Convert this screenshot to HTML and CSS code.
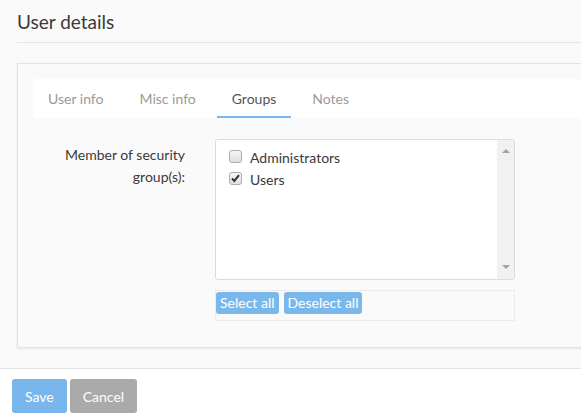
FILE: index.html
```html
<!DOCTYPE html>
<html>
<head>
<meta charset="utf-8">
<link rel="stylesheet" href="styles.css">
</head>
<body>
<div class="page">
  <header class="head">
    <h1 class="title">User details</h1>
  </header>
  <section class="panel">
    <nav class="tabs">
      <span class="tab">User info</span>
      <span class="tab">Misc info</span>
      <span class="tab active">Groups</span>
      <span class="tab">Notes</span>
    </nav>
    <div class="form-row">
      <label class="label">Member of security group(s):</label>
      <div class="field">
        <div class="listbox">
          <div class="items">
            <div class="item"><span class="cb"></span><span>Administrators</span></div>
            <div class="item"><span class="cb checked"><svg viewBox="0 0 13 13" width="13" height="13"><path d="M3 6.5 L5.3 9 L10 3.2" fill="none" stroke="#333" stroke-width="2"/></svg></span><span>Users</span></div>
          </div>
          <div class="scrollbar">
            <span class="arrow up"></span>
            <span class="arrow down"></span>
          </div>
        </div>
        <div class="actions">
          <button class="small-btn">Select all</button>
          <button class="small-btn">Deselect all</button>
        </div>
      </div>
    </div>
  </section>
</div>
<footer class="footer">
  <button class="btn save">Save</button>
  <button class="btn cancel">Cancel</button>
</footer>
</body>
</html>
```
FILE: styles.css
```css
* { box-sizing: border-box; }
html, body { margin: 0; padding: 0; }
body {
  font-family: "Lato", "Open Sans", sans-serif;
  font-size: 14px;
  color: #3a3a3a;
  background: #fff;
  overflow: hidden;
  width: 581px;
}
.page {
  background: #fafafa;
  padding: 0 0 20px 17px;
  border-bottom: 1px solid #e5e5e5;
  height: 369px;
}
.head {
  border-bottom: 1px solid #e5e5e5;
  height: 43px;
  padding-top: 9px;
}
.title {
  margin: 0;
  font-weight: normal;
  font-size: 19px;
  line-height: 26px;
  color: #3a3a3a;
}
.panel {
  margin-top: 20px;
  margin-right: -20px;
  border: 1px solid #e3e3e3;
  background: #fafafa;
  height: 285px;
  padding: 15px 0 0 15px;
  box-shadow: 0 1px 2px rgba(0,0,0,0.08);
}
.tabs {
  display: flex;
  background: #fff;
  height: 39px;
}
.tab {
  padding: 0 15px;
  margin-right: 6px;
  line-height: 39px;
  color: #9a9a9a;
  font-size: 14px;
}
.tab.active {
  color: #555;
  box-shadow: inset 0 -2px 0 #7ab8ec;
}
.form-row {
  display: flex;
  margin-top: 21px;
}
.label {
  width: 152px;
  text-align: right;
  padding-top: 5px;
  line-height: 22px;
  padding-left: 20px;
}
.field {
  margin-left: 30px;
  width: 300px;
}
.listbox {
  display: flex;
  height: 141px;
  border: 1px solid #dcdcdc;
  border-radius: 3px;
  background: #fff;
  overflow: hidden;
}
.items {
  flex: 1;
  padding: 6px 0 0 13px;
}
.item {
  display: flex;
  align-items: center;
  height: 22px;
  gap: 8px;
}
.cb {
  width: 13px;
  height: 13px;
  border: 1px solid #adadad;
  border-radius: 3px;
  background: linear-gradient(#f6f6f6, #e0e0e0);
  display: inline-flex;
  position: relative;
  top: -1px;
}
.cb svg { display: block; margin: -1px; }
.scrollbar {
  width: 17px;
  background: #f1f1f1;
  display: flex;
  flex-direction: column;
  justify-content: space-between;
  align-items: center;
  padding: 9px 0 10px;
}
.arrow {
  width: 0; height: 0;
  border-left: 4px solid transparent;
  border-right: 4px solid transparent;
}
.arrow.up { border-bottom: 4px solid #a3a3a3; }
.arrow.down { border-top: 4px solid #a3a3a3; }
.actions {
  margin-top: 10px;
  height: 31px;
  border: 1px solid #ececec;
  padding: 1px 0 0 0;
  display: flex;
  gap: 5px;
  align-items: flex-start;
}
.small-btn {
  font-family: inherit;
  font-size: 14px;
  color: #fff;
  background: #7ab8ec;
  border: 0;
  border-radius: 3px;
  height: 22px;
  padding: 0 4px;
  line-height: 22px;
}
.footer {
  padding: 10px 12px;
  display: flex;
  gap: 3px;
}
.btn {
  font-family: inherit;
  font-size: 14px;
  color: #fff;
  border: 0;
  border-radius: 3px;
  height: 34px;
  padding: 0 13px;
}
.save { background: #78b6eb; }
.cancel { background: #aaaaaa; }
```
